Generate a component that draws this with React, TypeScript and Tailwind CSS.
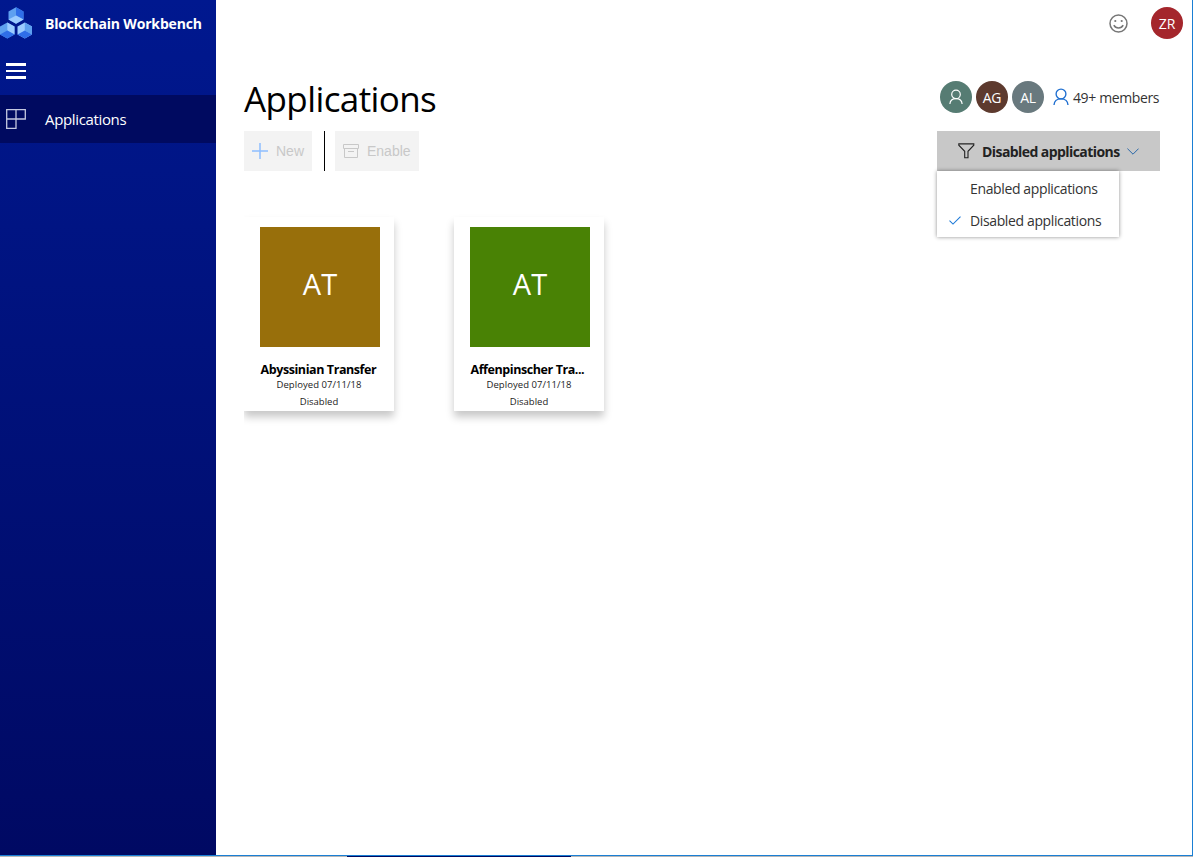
import React from "react";

const sans = "font-['Open_Sans','Noto_Sans',sans-serif]";

function Logo() {
  return (
    <svg width="33" height="34" viewBox="0 0 33 34" className="block shrink-0">
      <path d="M16 .3L23.5 4.5V12.6L16 16.8L8.5 12.6V4.5Z" fill="#5ea0f0" />
      <path d="M16 .3L23.5 4.5V12.6L16 8.6Z" fill="#2f6ee8" />
      <path d="M8.5 12.6L16 8.6L23.5 12.6L16 16.8Z" fill="#9bcbff" />
      <path d="M7.3 15.5L14.5 19.4V27.6L7.3 31.6L0 27.6V19.4Z" fill="#5ea0f0" />
      <path d="M7.3 15.5L14.5 19.4V27.6L7.3 23.5Z" fill="#9bcbff" />
      <path d="M0 27.6L7.3 23.5L14.5 27.6L7.3 31.6Z" fill="#2f6ee8" />
      <path d="M24.8 15.5L32 19.4V27.6L24.8 31.6L17.5 27.6V19.4Z" fill="#9bcbff" />
      <path d="M24.8 15.5L32 19.4V27.6L24.8 23.5Z" fill="#5ea0f0" />
      <path d="M17.5 27.6L24.8 23.5L32 27.6L24.8 31.6Z" fill="#2f6ee8" />
    </svg>
  );
}

function Person({ className }: { className: string }) {
  return (
    <svg viewBox="0 0 16 18" fill="none" stroke="currentColor" strokeWidth="1.35" className={className}>
      <circle cx="8" cy="6" r="4.9" />
      <path d="M1 17C1.3 13.2 4.2 10.9 8 10.9S14.7 13.2 15 17" />
    </svg>
  );
}

function Sidebar() {
  return (
    <aside className="flex h-[855px] w-[216px] shrink-0 flex-col bg-linear-to-b from-[#00188f] to-[#000963] text-white">
      <div className="flex h-[47px] items-start pt-[7px]">
        <Logo />
        <span className="ml-3 mt-[7px] whitespace-nowrap text-[14px] leading-5 font-bold tracking-[-0.17px]">
          Blockchain Workbench
        </span>
      </div>
      <div className="flex h-12 flex-col pt-4 pl-[6px]">
        <span className="h-[3px] w-5 bg-white" />
        <span className="mt-1 h-[2px] w-5 bg-white" />
        <span className="mt-1 h-[3px] w-5 bg-white" />
      </div>
      <nav className="flex h-12 items-center bg-[#000a60] pl-[6px]">
        <svg width="20" height="20" viewBox="0 0 20 20" fill="none" stroke="#c4c8e0" strokeWidth="1.3" className="shrink-0">
          <path d="M.7.7H19.3V10H.7ZM10 .7V19.3H.7V.7" />
        </svg>
        <span className="ml-[19px] text-[15px] leading-5 tracking-[-0.35px]">Applications</span>
      </nav>
    </aside>
  );
}

function Card({ initials, name, color }: { initials: string; name: string; color: string }) {
  return (
    <article className="flex h-[194px] w-[150px] flex-col items-center bg-white pt-[10px] shadow-[0_6px_8px_rgba(0,0,0,0.22)]">
      <div className={`ml-[2px] flex size-[120px] items-center justify-center text-[29px] leading-9 text-white ${color}`}>
        <span className="-mt-[7px] tracking-[0.2px]">{initials}</span>
      </div>
      <h2 className="mt-[14px] w-[117px] whitespace-nowrap text-[12.5px] leading-[17px] font-bold tracking-[-0.42px] text-black">{name}</h2>
      <p className="text-[9.5px] leading-[13px] tracking-[0.05px] text-[#222]">Deployed 07/11/18</p>
      <p className="mt-1 text-[9.5px] leading-[13px] text-[#222]">Disabled</p>
    </article>
  );
}

export default function App() {
  return (
    <div className={`flex h-[857px] w-[1193px] flex-col overflow-hidden bg-white ${sans}`}>
      <div className="flex h-[855px] border-r border-[#1a7fd4]">
        <Sidebar />
        <main className="flex min-w-0 flex-1 flex-col pl-7">
          <header className="flex h-[46px] items-center justify-end pr-[9px]">
            <svg width="19" height="19" viewBox="0 0 19 19" fill="none" stroke="#767676" strokeWidth="1.5" className="mr-[23px]">
              <circle cx="9.5" cy="9.5" r="8.5" />
              <path d="M4.8 11.2C6.8 15 12.2 15 14.2 11.2" />
              <circle cx="6.3" cy="7" r="1.1" fill="#767676" stroke="none" />
              <circle cx="12.7" cy="7" r="1.1" fill="#767676" stroke="none" />
            </svg>
            <span className="flex size-8 items-center justify-center rounded-full bg-[#a4262c] text-[14px] tracking-[-0.2px] text-white">ZR</span>
          </header>

          <section className="flex h-[85px] items-start justify-between pr-8">
            <h1 className="mt-[29px] text-[35px] leading-[48px] font-medium tracking-[-0.6px] text-black">Applications</h1>
            <div className="mt-[35px] flex h-8 items-center gap-1 text-[14px] text-white">
              <span className="flex size-8 items-center justify-center rounded-full bg-[#567c73]">
                <Person className="h-4 w-[14px]" />
              </span>
              <span className="flex size-8 items-center justify-center rounded-full bg-[#5d3a2e] pt-px tracking-[-0.3px]">AG</span>
              <span className="flex size-8 items-center justify-center rounded-full bg-[#69797e] pt-px tracking-[-0.3px]">AL</span>
              <Person className="ml-[5px] h-[18px] w-4 text-[#1f6fd0]" />
              <span className="w-[87px] whitespace-nowrap pt-px text-[14px] tracking-[-0.38px] text-[#333]">49+ members</span>
            </div>
          </section>

          <section className="flex h-10 justify-between pr-8 text-[14px]">
            <div className="flex font-['Liberation_Sans',sans-serif] text-[#c8c8c8]">
              <button className="flex w-[68px] items-center bg-[#f3f3f3] pl-2">
                <svg width="16" height="16" viewBox="0 0 16 16" stroke="#8fbfff" strokeWidth="1.5">
                  <path d="M8 0V16M0 8H16" />
                </svg>
                <span className="ml-2">New</span>
              </button>
              <span className="ml-3 w-px bg-black" />
              <button className="ml-[10px] flex w-[84px] items-center bg-[#f3f3f3] pl-2">
                <svg width="16" height="14" viewBox="0 0 16 14" fill="none" stroke="currentColor">
                  <path d="M.5.5H15.5V4.5H.5ZM1.5 4.5V13.5H14.5V4.5M5 7.5H11" />
                </svg>
                <span className="ml-2">Enable</span>
              </button>
            </div>

            <div className="relative w-[223px]">
              <button className="flex h-10 w-full items-center bg-[#c8c8c8] pl-[21px] text-[#222]">
                <svg width="17" height="16" viewBox="0 0 17 16" fill="none" stroke="currentColor" strokeWidth="1.1">
                  <path d="M.8.9H15.8V2.2L10 8.3V14.8H6.7V8.3L.8 2.2Z" />
                </svg>
                <span className="ml-[7px] w-[137px] whitespace-nowrap text-left text-[14px] font-bold tracking-[-0.57px]">Disabled applications</span>
                <svg width="12" height="7" viewBox="0 0 12 7" fill="none" stroke="#2867a8" className="ml-2">
                  <path d="M.4.6L6 6.2L11.6.6" />
                </svg>
              </button>
              <ul className="absolute top-10 left-0 flex h-[66px] w-[182px] flex-col bg-white pt-px text-[14px] text-[#333] shadow-[0_0_4px_rgba(0,0,0,0.45)]">
                <li className="flex h-8 items-center pl-[33px] whitespace-nowrap tracking-[-0.37px]">Enabled applications</li>
                <li className="flex h-8 items-center pl-3 whitespace-nowrap tracking-[-0.37px]">
                  <svg width="12" height="9" viewBox="0 0 12 9" fill="none" stroke="#1f7bd8" strokeWidth="1.1" className="mr-[9px]">
                    <path d="M.5 4.7L4 8.1L11.5.6" />
                  </svg>
                  Disabled applications
                </li>
              </ul>
            </div>
          </section>

          <section className="mt-[38px] flex h-[230px] w-[700px] gap-[60px] overflow-hidden pt-2">
            <Card initials="AT" name="Abyssinian Transfer" color="bg-[#986f0b]" />
            <Card initials="AT" name="Affenpinscher Tra..." color="bg-[#498205]" />
          </section>
        </main>
      </div>
      <div className="h-px bg-[#1a7fd4]" />
      <div className="flex h-px bg-[#b8b8b8]">
        <span className="ml-[347px] w-[224px] bg-[#000a60]" />
      </div>
    </div>
  );
}
